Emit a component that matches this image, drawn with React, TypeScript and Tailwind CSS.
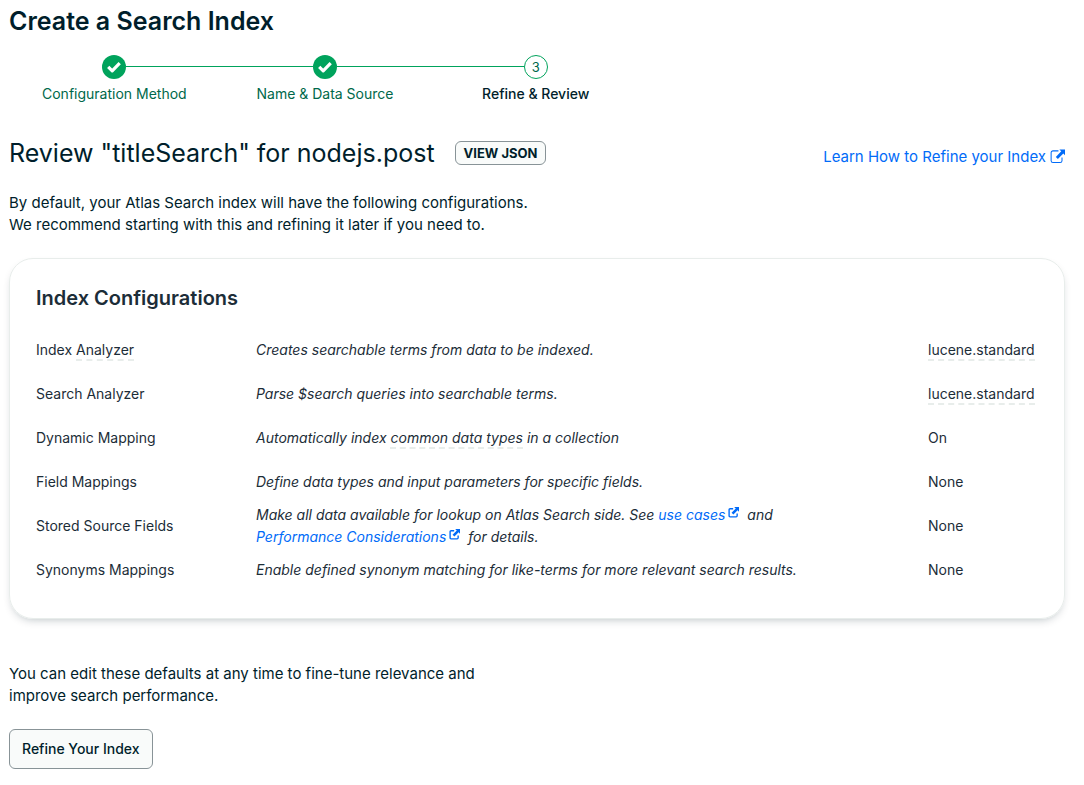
import React from "react";

function CheckCircle() {
  return (
    <span className="flex size-6 items-center justify-center rounded-full bg-[#00a35c]">
      <svg viewBox="0 0 16 16" className="size-4" aria-hidden="true">
        <path
          d="M2.2 7.9 6.2 11.8 13.7 4.1"
          fill="none"
          stroke="#fff"
          strokeWidth="3.2"
          strokeLinejoin="round"
        />
      </svg>
    </span>
  );
}

function OpenIcon({ className, thin }: { className: string; thin?: boolean }) {
  return (
    <svg viewBox="0 0 16 16" className={className} aria-hidden="true">
      <path
        d={
          thin
            ? "M9 2H3.2A2 2 0 0 0 1.2 4V12.5A2 2 0 0 0 3.2 14.5H10.8A2 2 0 0 0 12.8 12.5V9"
            : "M7.5 2.6H3A1.4 1.4 0 0 0 1.6 4V12.9A1.4 1.4 0 0 0 3 14.3H11.9A1.4 1.4 0 0 0 13.3 12.9V9.5"
        }
        fill="none"
        stroke="currentColor"
        strokeWidth={thin ? 1.1 : 2}
        strokeLinejoin="round"
      />
      <path
        d={thin ? "M10 .4H16V6.6L14.2 4.8 8.4 10.6 6.2 8.4 12 2.5Z" : "M9 0H16V7L13.9 4.9 7.9 11 5.2 8.3 11.3 2.3Z"}
        fill="currentColor"
      />
    </svg>
  );
}

const steps = ["Configuration Method", "Name & Data Source", "Refine & Review"];

function Stepper() {
  return (
    <ol className="mt-4 grid w-full max-w-[632px] grid-cols-3">
      {steps.map((label, i) => {
        const current = i === steps.length - 1;
        return (
          <li key={label} aria-current={current ? "step" : undefined} className="flex flex-col items-center">
            <div className="flex w-full items-center">
              <span className={i === 0 ? "mb-px h-px flex-1" : "mb-px h-px flex-1 bg-[#00a35c]"} />
              {current ? (
                <span className="flex size-6 items-center justify-center rounded-full border border-[#00a35c] text-[13px] text-[#00684a]">
                  3
                </span>
              ) : (
                <CheckCircle />
              )}
              <span className={current ? "mb-px h-px flex-1" : "mb-px h-px flex-1 bg-[#00a35c]"} />
            </div>
            <span
              className={
                current
                  ? "mt-1 text-sm leading-[22px] font-medium text-[#001e2b]"
                  : "mt-1 text-sm leading-[22px] text-[#00684a]"
              }
            >
              {label}
            </span>
          </li>
        );
      })}
    </ol>
  );
}

function Term({ children }: { children: React.ReactNode }) {
  return <span className="border-b-2 border-dashed border-[#e8edeb] pb-px">{children}</span>;
}

function DocLink({ children }: { children: React.ReactNode }) {
  return (
    <a href="#docs" className="mr-1 text-[#016bf8]">
      {children}
      <OpenIcon className="mb-2 ml-[3px] inline size-[11px]" />
    </a>
  );
}

const rows: { name: React.ReactNode; text: React.ReactNode; value: React.ReactNode }[] = [
  {
    name: <>Index <Term>Analyzer</Term></>,
    text: "Creates searchable terms from data to be indexed.",
    value: <Term>lucene.standard</Term>,
  },
  {
    name: "Search Analyzer",
    text: "Parse $search queries into searchable terms.",
    value: <Term>lucene.standard</Term>,
  },
  {
    name: "Dynamic Mapping",
    text: <>Automatically index <Term>common data types</Term> in a collection</>,
    value: "On",
  },
  {
    name: "Field Mappings",
    text: "Define data types and input parameters for specific fields.",
    value: "None",
  },
  {
    name: "Stored Source Fields",
    text: (
      <>
        Make all data available for lookup on Atlas Search side. See <DocLink>use cases</DocLink> and
        <br />
        <DocLink>Performance Considerations</DocLink> for details.
      </>
    ),
    value: "None",
  },
  {
    name: "Synonyms Mappings",
    text: "Enable defined synonym matching for like-terms for more relevant search results.",
    value: "None",
  },
];

export default function App() {
  return (
    <main className="bg-white pt-1 pr-[19px] pb-4 pl-[9px] font-['Inter','Liberation_Sans',sans-serif] text-[15px] leading-[22px] text-[#001e2b]">
      <h1 className="text-[25px] leading-[35px] font-semibold">Create a Search Index</h1>
      <Stepper />

      <div className="mt-8 flex items-center justify-between">
        <div className="flex items-center gap-5">
          <h2 className="text-[25px] leading-8">Review "titleSearch" for nodejs.post</h2>
          <button
            type="button"
            className="h-6 rounded-md border border-[#889397] bg-[#f9fbfa] px-2 text-[13px] leading-5 font-bold"
          >
            VIEW JSON
          </button>
        </div>
        <a href="#learn" className="mt-2 flex items-center gap-1 text-[#016bf8]">
          Learn How to Refine your Index
          <OpenIcon thin className="mb-0.5 size-[15px]" />
        </a>
      </div>

      <p className="mt-[23px]">
        By default, your Atlas Search index will have the following configurations.
        <br />
        We recommend starting with this and refining it later if you need to.
      </p>

      <section className="mt-[22px] rounded-3xl border border-[#e8edeb] px-[26px] pt-[27px] pb-[26px] text-[#1c2d38] shadow-[0_4px_10px_-4px_rgba(0,30,43,0.3)]">
        <h3 className="text-[20px] leading-6 font-semibold">Index Configurations</h3>
        <table className="mt-[18px] w-full text-left text-sm leading-[22px]">
          <tbody>
            {rows.map((row, i) => (
              <tr key={i} className="h-11">
                <th scope="row" className="w-[220px] p-0 font-normal">{row.name}</th>
                <td className="p-0 italic">{row.text}</td>
                <td className="w-[110px] p-0">{row.value}</td>
              </tr>
            ))}
          </tbody>
        </table>
      </section>

      <p className="mt-11">
        You can edit these defaults at any time to fine-tune relevance and
        <br />
        improve search performance.
      </p>
      <button
        type="button"
        className="mt-[22px] h-10 rounded-md border border-[#889397] bg-[#f9fbfa] px-3 text-sm font-medium"
      >
        Refine Your Index
      </button>
    </main>
  );
}
